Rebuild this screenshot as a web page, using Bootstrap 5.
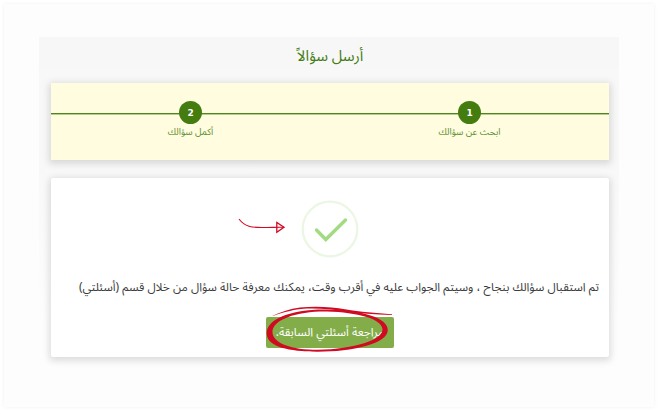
<!DOCTYPE html>
<html lang="ar" dir="rtl">
<head>
<meta charset="utf-8">
<meta name="viewport" content="width=device-width, initial-scale=1">
<title>أرسل سؤالاً</title>
<link href="https://cdn.jsdelivr.net/npm/bootstrap@5.3.0/dist/css/bootstrap.min.css" rel="stylesheet">
<style>
body{font-family:"Noto Sans Arabic","Noto Sans","DejaVu Sans",sans-serif;background:#fff;height:411px;padding:4px;overflow:hidden}
.page-frame{height:403px;width:650px;background:#fdfdfd;box-shadow:0 0 4px rgba(0,0,0,.06);padding:33px 35px 0}
.ask-panel{width:580px;height:334px;background:linear-gradient(#f8f8f8 0,#f8f8f8 35%,#fdfdfd 85%);padding:0 10px 0 12px}
.ask-title{height:32px;margin:0 -10px 0 -12px;padding-left:2px;background:#f7f7f7;color:#447c14;font-size:15px;line-height:38px}
.raised{width:558px;box-shadow:0 2px 7px 2px rgba(0,0,0,.13);flex-shrink:0}
.steps{height:77px;margin-top:14px;background:#fffcdf;color:#447c14;padding-top:18px;position:relative}
.steps::before{content:"";position:absolute;left:0;right:0;top:30px;height:1px;background:#4c8820;box-shadow:0 1px #b5cb8d}
.step-dot{width:23px;height:23px;background:#447c10;color:#fff;font:bold 9px "DejaVu Sans",sans-serif;position:relative}
.step-label{font-size:9.3px;line-height:16px;color:#5b8f32}
.result{height:179px;margin-top:18px;background:#fff;border-radius:2px;padding-top:22px;position:relative}
.tick{width:58px;height:58px}
.message{font-size:11.9px;line-height:24px;margin-top:18px;color:#3c3c3c;padding-right:10px}
.btn-review{width:128px;height:31px;margin-top:17px;padding:0;background:#82ad49;color:#fff;font-size:11.8px;line-height:31px;border:0;border-radius:2px}
.btn-review:hover{background:#739a3f;color:#fff}
.marks{position:absolute;left:0;top:0;width:558px;height:179px;pointer-events:none}
.fit{display:inline-block;white-space:nowrap}
</style>
</head>
<body>
<main class="page-frame">
<section class="ask-panel d-flex flex-column">
<h1 class="ask-title text-center fw-normal mb-0"><span class="fit">أرسل سؤالاً</span></h1>
<div class="steps raised d-flex">
<div class="w-50 d-flex flex-column align-items-center"><span class="step-dot rounded-circle d-flex align-items-center justify-content-center">1</span><span class="step-label fit">ابحث عن سؤالك</span></div>
<div class="w-50 d-flex flex-column align-items-center"><span class="step-dot rounded-circle d-flex align-items-center justify-content-center">2</span><span class="step-label fit">أكمل سؤالك</span></div>
</div>
<div class="result raised d-flex flex-column align-items-center">
<svg class="tick" viewBox="0 0 58 58" fill="none"><circle cx="29" cy="29" r="27.3" stroke="#ebf7e3" stroke-width="2.3"/><path d="M15.5 30 24.8 39.5 44.5 20" stroke="#a3db82" stroke-width="3.4" stroke-linecap="round"/></svg>
<p class="message mb-0 align-self-start"><span class="fit">تم استقبال سؤالك بنجاح ، وسيتم الجواب عليه في أقرب وقت، يمكنك معرفة حالة سؤال من خلال قسم (أسئلتي)</span></p>
<a class="btn btn-review" href="#"><span class="fit">مراجعة أسئلتي السابقة.</span></a>
<svg class="marks" viewBox="51 178 558 179" fill="none" stroke="#d00a22">
<path d="M239 219C245 227 252 227.5 262 227.5S278 227 284 227.3" stroke-width="1.1"/>
<path d="M276.8 222.5V232.3L284 227.3Z" stroke-width="1.3"/>
<path fill="#d00a22" stroke="none" d="M271.5 316.2C281 312 290 309 300 307.6C315 306 333 307 345 309.2C361 312 375 312.7 392 314.2V314.9C375 314.4 359 313.8 345 311.6C331 308.8 314 307.7 301 308.9C289 310.4 281 313.2 271.5 316.2Z"/>
<path fill="#d00a22" stroke="none" fill-rule="evenodd" d="M266.7 334C266 319 291 309 327 309.5C362 310 388 318 387.8 330C387.5 344 352 351.8 317 351.7C289 351.5 267.5 347 266.7 334ZM272.5 333C274 343.5 291 349.8 318 349.8C354 349 383.5 340 382.5 329C381 318.5 358 312.5 327 311.5C299 311 271 319 272.5 333Z"/>
</svg>
</div>
</section>
</main>
<script src="https://cdn.jsdelivr.net/npm/bootstrap@5.3.0/dist/js/bootstrap.bundle.min.js"></script>
</body>
</html>
